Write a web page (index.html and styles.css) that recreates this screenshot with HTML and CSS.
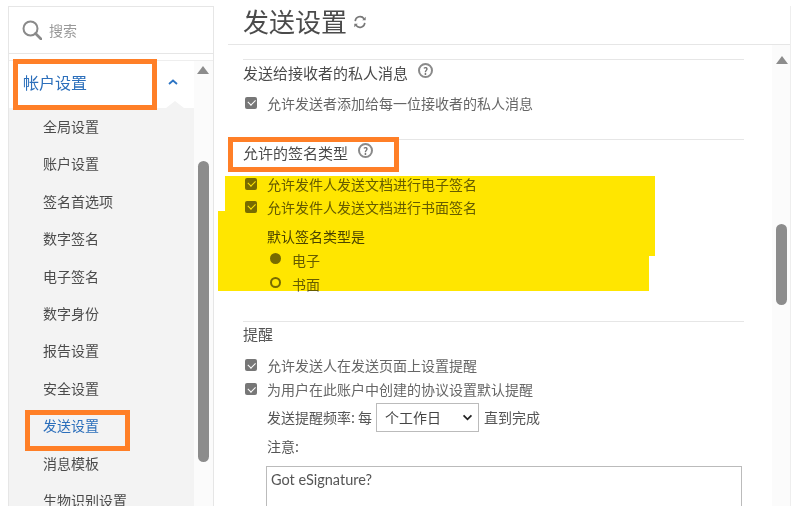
FILE: index.html
```html
<!DOCTYPE html>
<html lang="zh">
<head>
<meta charset="utf-8">
<title>发送设置</title>
<link rel="stylesheet" href="styles.css">
</head>
<body>
<div class="page">
  <aside class="sidebar">
    <div class="search">
      <svg class="search-icon" viewBox="0 0 20 20" width="20" height="20"><circle cx="8.5" cy="8.5" r="7" fill="none" stroke="#8a8a8a" stroke-width="2"/><path d="M13.5 13.5L19 19" stroke="#8a8a8a" stroke-width="2.6" stroke-linecap="round"/></svg>
      <span>搜索</span>
    </div>
    <div class="nav-wrap">
      <nav class="nav">
        <div class="nav-head">
          <span>帐户设置</span>
          <svg class="chev" viewBox="0 0 10 6" width="10" height="6"><path d="M1 5L5 1.5L9 5" fill="none" stroke="#2c74c4" stroke-width="1.8"/></svg>
        </div>
        <ul class="nav-list">
          <li>全局设置</li>
          <li>账户设置</li>
          <li>签名首选项</li>
          <li>数字签名</li>
          <li>电子签名</li>
          <li>数字身份</li>
          <li>报告设置</li>
          <li>安全设置</li>
          <li class="active">发送设置</li>
          <li>消息模板</li>
          <li>生物识别设置</li>
        </ul>
      </nav>
      <div class="scroll scroll-side">
        <span class="arrow"></span>
        <span class="thumb thumb-side"></span>
      </div>
    </div>
  </aside>
  <main class="main">
    <header class="title-row">
      <h1>发送设置</h1>
      <svg class="refresh" viewBox="0 0 16 16" width="14" height="14"><path d="M2.5 7A5.6 5.6 0 0 1 12.6 4.2" fill="none" stroke="#777" stroke-width="1.8"/><path d="M13.5 9A5.6 5.6 0 0 1 3.4 11.8" fill="none" stroke="#777" stroke-width="1.8"/><path d="M14.5 2v4h-4zM1.5 14v-4h4z" fill="#777"/></svg>
    </header>
    <div class="content">
      <div class="settings">
        <section class="section s-private">
          <h2>发送给接收者的私人消息 <span class="help">?</span></h2>
          <label class="check"><span class="box"></span>允许发送者添加给每一位接收者的私人消息</label>
        </section>
        <section class="section s-types">
          <h2>允许的签名类型 <span class="help">?</span></h2>
          <label class="check"><span class="box"></span>允许发件人发送文档进行电子签名</label>
          <label class="check"><span class="box"></span>允许发件人发送文档进行书面签名</label>
          <div class="default-label">默认签名类型是</div>
          <label class="radio"><span class="dot on"></span>电子</label>
          <label class="radio"><span class="dot"></span>书面</label>
        </section>
        <section class="section s-remind">
          <h2>提醒</h2>
          <label class="check"><span class="box"></span>允许发送人在发送页面上设置提醒</label>
          <label class="check"><span class="box"></span>为用户在此账户中创建的协议设置默认提醒</label>
          <div class="freq">发送提醒频率: 每
            <span class="select">个工作日<svg viewBox="0 0 12 8" width="11" height="7"><path d="M1.5 1.5L6 6L10.5 1.5" fill="none" stroke="#222" stroke-width="2"/></svg></span>
            直到完成</div>
          <div class="note-label">注意:</div>
          <div class="textarea">Got eSignature?</div>
        </section>
      </div>
      <div class="scroll scroll-main">
        <span class="arrow"></span>
        <span class="thumb thumb-main"></span>
      </div>
    </div>
  </main>
</div>
<svg class="marker" width="793" height="508" viewBox="0 0 793 508"><polygon points="225,176 655,176 655,256 649,256 649,291 218,291 218,211 225,211" fill="#ffe600"/></svg>
<div class="callout c-head"></div>
<div class="callout c-send"></div>
<div class="callout c-type"></div>
</body>
</html>
```
FILE: styles.css
```css
* { box-sizing: border-box; }
html, body { margin: 0; height: 508px; overflow: hidden; background: #fff; }
body { position: relative; font-family: "Noto Sans CJK SC", "Noto Sans", sans-serif; font-size: 14px; color: #555; }
.page { display: flex; height: 508px; padding: 6px 2px 0 8px; }
.sidebar { width: 206px; flex: none; display: flex; flex-direction: column; border: 1px solid #e6e6e6; border-bottom: 0; height: 500px; }
.search { height: 47px; flex: none; display: flex; align-items: center; gap: 7px; padding-left: 13px; border-bottom: 1px solid #e6e6e6; color: #999; font-size: 14px; }
.search-icon { flex: none; }
.nav-wrap { flex: 1; display: flex; margin-top: 6px; min-height: 0; border-top: 1px solid #eee; }
.nav { width: 185px; flex: none; overflow: hidden; }
.nav-head { height: 47px; display: flex; align-items: center; justify-content: space-between; padding: 0 16px 5px 14px; color: #2c6fbb; font-size: 16px; position: relative; }
.nav-head::after { content: ""; position: absolute; left: 157px; bottom: 0; border: 9px solid transparent; border-top: 0; border-bottom: 7px solid #f3f3f3; }
.chev { flex: none; }
.nav-list { list-style: none; margin: 0; padding: 0 0 0 34px; background: #f3f3f3; height: 420px; }
.nav-list li { height: 37.4px; line-height: 37.4px; color: #4b4b4b; white-space: nowrap; }
.nav-list li.active { color: #2c6fbb; }
.scroll { flex: none; position: relative; background: #fbfbfb; }
.scroll-side { width: 19px; }
.arrow { position: absolute; left: 3px; top: 5px; border: 6px solid transparent; border-top: 0; border-bottom: 8px solid #8c8c8c; }
.thumb { position: absolute; left: 4px; width: 11px; background: #8c8c8c; border-radius: 6px; }
.thumb-side { top: 100px; height: 301px; }
.main { flex: 1; min-width: 0; display: flex; flex-direction: column; margin-left: 14px; border-right: 1px solid #eee; height: 500px; }
.title-row { height: 39px; flex: none; display: flex; align-items: center; gap: 6px; padding: 0 0 8px 15px; border-bottom: 1px solid #e6e6e6; }
h1 { margin: 0; font-size: 26px; font-weight: 400; color: #4b4b4b; line-height: 34px; }
.refresh { flex: none; margin-top: 1px; }
.content { flex: 1; display: flex; min-height: 0; overflow: hidden; }
.settings { flex: 1; min-width: 0; padding: 14px 0 0 15px; width: 516px; }
.section { width: 501px; border-top: 1px solid #e6e6e6; }
h2 { margin: 0; font-size: 15px; font-weight: 400; color: #4b4b4b; display: flex; align-items: center; gap: 6px; height: 24px; }
.help { width: 15px; height: 15px; border: 2px solid #8a8a8a; border-radius: 50%; font-size: 10px; font-weight: 700; line-height: 11px; text-align: center; color: #777; margin-left: 4px; margin-top: -3px; }
.check { display: flex; align-items: center; height: 23px; color: #666; }
.box { flex: none; width: 12px; height: 12px; margin: 0 10px 0 2px; border-radius: 2px; background-color: #777; position: relative; }
.box::after { content: ""; position: absolute; left: 2.5px; top: 2.5px; width: 6px; height: 3.5px; border-left: 1.6px solid #fff; border-bottom: 1.6px solid #fff; transform: rotate(-45deg); }
.s-private { height: 80px; }
.s-private .check { margin-top: 7px; }
.s-types { height: 182px; }
.s-types .check:first-of-type { margin-top: 8px; }
.default-label { margin: 6px 0 0 24px; height: 24px; line-height: 24px; color: #4b4b4b; }
.radio { display: flex; align-items: center; height: 23.5px; margin-left: 27px; color: #666; }
.radio + .radio { height: 24px; }
.dot { flex: none; width: 11px; height: 11px; border: 2px solid #777; border-radius: 50%; margin-right: 11px; margin-top: -2px; }
.dot.on { background: #777; }
.s-remind h2 { height: 22px; color: #555; }
.s-remind .check { height: 24px; }
.s-remind h2 + .check { margin-top: 9px; }
.freq { display: flex; align-items: center; gap: 4px; margin: 2px 0 0 24px; height: 28px; color: #555; }
.select { width: 103px; height: 29px; margin-right: 1px; border: 1px solid #bbb; display: flex; align-items: center; justify-content: space-between; padding: 0 2px 0 8px; color: #444; }
.select svg { margin-right: 3px; }
.note-label { margin: 4px 0 0 24px; height: 22px; line-height: 22px; color: #555; }
.textarea { margin: 9px 0 0 23px; width: 476px; height: 60px; border: 1px solid #bbb; border-bottom: 0; padding: 4px 4px; font-family: Lato, sans-serif; font-size: 14.5px; color: #555; }
.scroll-main { width: 18px; margin-left: auto; }
.scroll-main .arrow { top: 11px; left: 4px; }
.thumb-main { left: 4px; top: 179px; height: 81px; }
.marker { position: absolute; left: 0; top: 0; mix-blend-mode: multiply; pointer-events: none; }
.callout { position: absolute; border: 5px solid #ff7f27; pointer-events: none; }
.c-head { left: 13px; top: 59px; width: 144px; height: 51px; }
.c-send { left: 25px; top: 410px; width: 105px; height: 41px; }
.c-type { left: 228px; top: 137px; width: 171px; height: 35px; }
```
